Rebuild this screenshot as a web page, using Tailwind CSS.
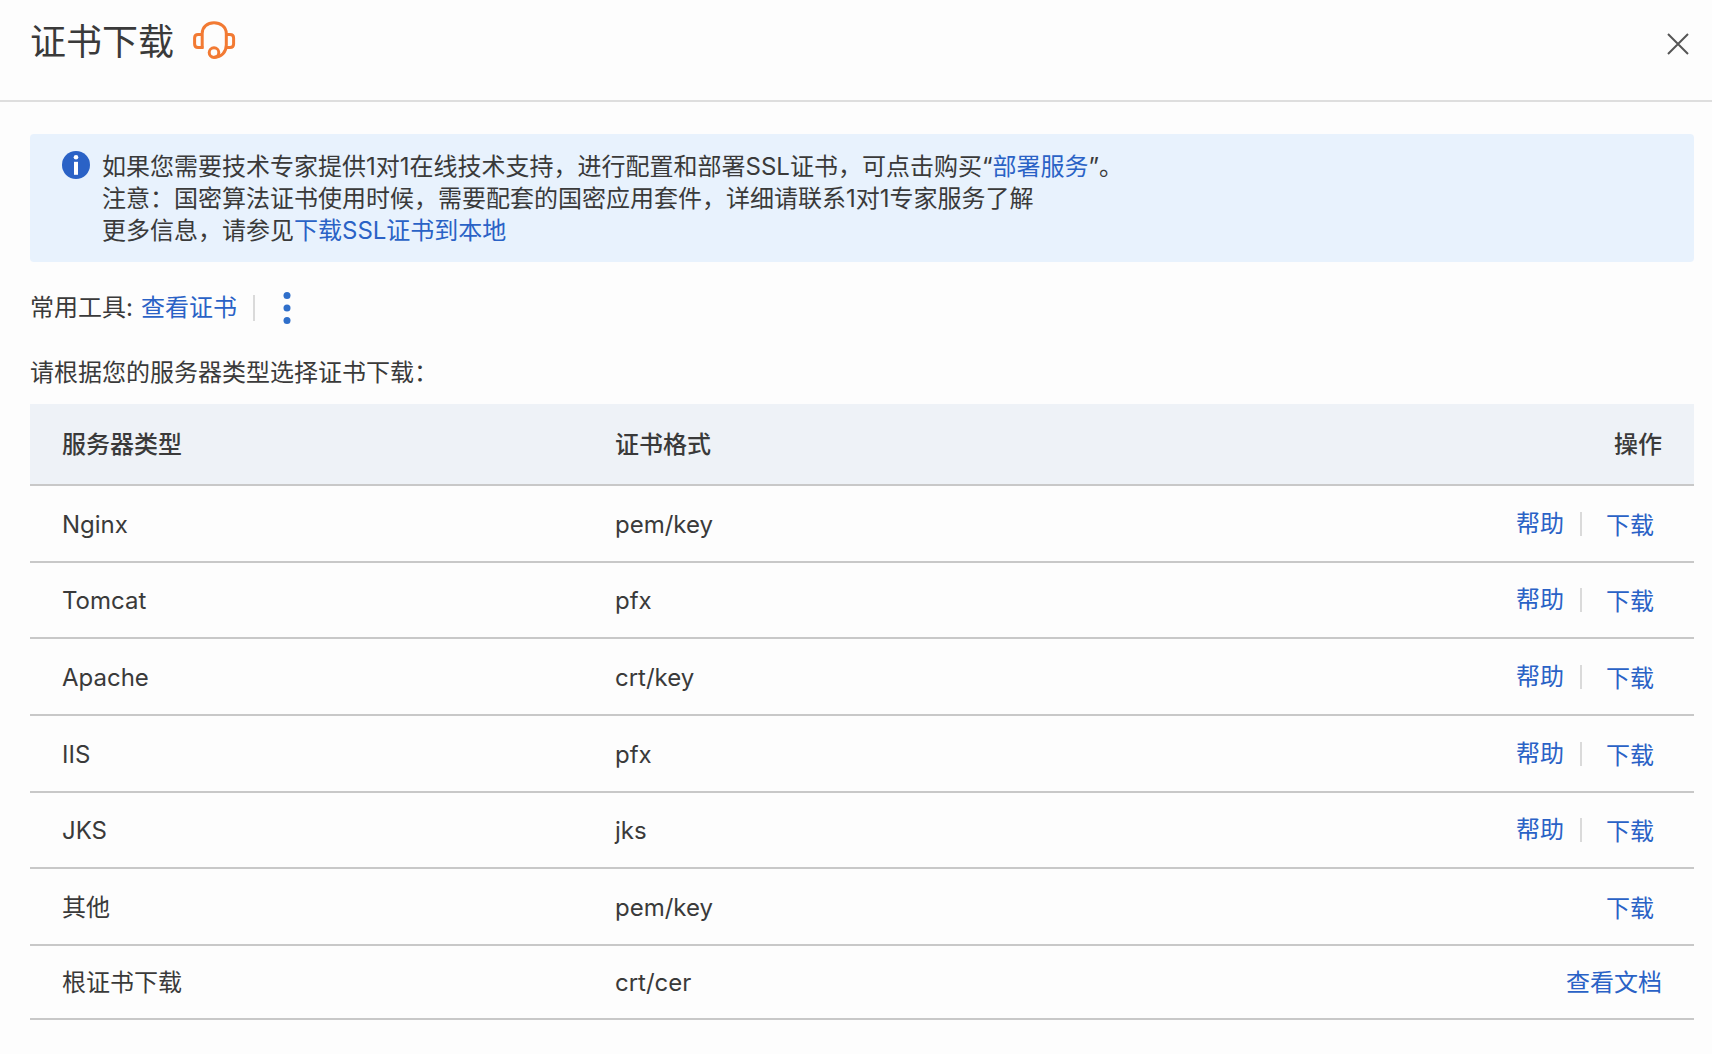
<!DOCTYPE html>
<html lang="zh-CN">
<head>
<meta charset="utf-8">
<meta name="viewport" content="width=device-width, initial-scale=1">
<title>证书下载</title>
<script src="https://cdn.jsdelivr.net/npm/@tailwindcss/browser@4"></script>
</head>
<body class="min-h-screen bg-[#fdfdfd] font-['Inter','Noto_Sans_CJK_SC',sans-serif] text-[24px] leading-8 text-[#3a3a3a]">
<header class="flex h-[102px] items-start justify-between border-b-2 border-[#dedede] pl-[30px] pr-[22px]">
  <div class="flex items-start gap-[18px] pt-[18px]">
    <h1 class="text-[36px] leading-[48px]">证书下载</h1>
    <svg class="mt-[3px] h-[39px] w-[44px]" viewBox="0 0 44 39" fill="none" stroke="#f27a33" stroke-width="3" role="img" aria-label="客服">
      <path d="M10.2 27.5V12.5C10.2 6 15.5 1.8 22 1.8S34.3 6 34.3 12.5V24C34.3 31 29.5 36.2 22.2 36.2"/>
      <path d="M10.2 13.5H6Q2.6 13.5 2.6 17V23Q2.6 26.5 6 26.5H11.4"/>
      <path d="M34.3 13.5H38Q41.6 13.5 41.6 17V23Q41.6 26.5 38 26.5H34.3"/>
      <circle cx="22" cy="31.6" r="4.8"/>
    </svg>
  </div>
  <button type="button" aria-label="关闭" class="mt-[32px]">
    <svg class="h-6 w-6" viewBox="0 0 24 24" stroke="#555" stroke-width="2"><path d="M2 2 22 22M22 2 2 22"/></svg>
  </button>
</header>
<main class="px-[30px] pt-8 pr-[18px]">
  <section class="flex gap-3 rounded bg-[#e8f2fd] pt-[17px] pb-[15px] pl-8 pr-8">
    <svg class="h-7 w-7 shrink-0" viewBox="0 0 28 28"><circle cx="14" cy="14" r="14" fill="#2a62c6"/><circle cx="14" cy="6.3" r="2.3" fill="#fff"/><path d="M12 10.8h4v13h-4z" fill="#fff"/></svg>
    <div>
      <p>如果您需要技术专家提供1对1在线技术支持，进行配置和部署SSL证书，可点击购买“<a href="#" class="text-[#2a62c6]">部署服务</a>”。</p>
      <p>注意：国密算法证书使用时候，需要配套的国密应用套件，详细请联系1对1专家服务了解</p>
      <p>更多信息，请参见<a href="#" class="text-[#2a62c6]">下载SSL证书到本地</a></p>
    </div>
  </section>
  <div class="mt-7 flex h-9 items-center">
    <span>常用工具:</span>
    <a href="#" class="ml-2 text-[#2a62c6]">查看证书</a>
    <span class="ml-4 h-[26px] w-[2px] bg-[#dadada]"></span>
    <button type="button" aria-label="更多工具" class="ml-7">
      <svg class="h-8 w-2" viewBox="0 0 8 32" fill="#2f6fca"><circle cx="4" cy="3.5" r="3.5"/><circle cx="4" cy="16" r="3.5"/><circle cx="4" cy="28.5" r="3.5"/></svg>
    </button>
  </div>
  <p class="mt-[31px]">请根据您的服务器类型选择证书下载：</p>
  <table class="mt-[15px] w-full table-fixed border-separate border-spacing-0 [&_td]:border-b-2 [&_td]:border-[#c8c8c8] [&_td]:px-8 [&_th]:border-b-2 [&_th]:border-[#c8c8c8] [&_th]:px-8 [&_th]:pt-[2px] [&_th]:font-medium [&_td]:pt-[2px] [&_a]:text-[#2a62c6] [&_button]:text-[#2a62c6]">
    <colgroup><col class="w-[553px]"><col><col></colgroup>
    <thead><tr class="h-[82px] bg-[#eef2f7] text-left"><th scope="col">服务器类型</th><th scope="col">证书格式</th><th scope="col" class="text-right">操作</th></tr></thead>
    <tbody>
      <tr class="h-[77px]"><td>Nginx</td><td>pem/key</td><td><div class="flex items-center justify-end pr-2 pb-[2px]"><a href="#">帮助</a><span class="ml-4 mr-6 h-6 w-[2px] bg-[#dadada]"></span><button type="button" class="pt-1">下载</button></div></td></tr>
      <tr class="h-[76px]"><td>Tomcat</td><td>pfx</td><td><div class="flex items-center justify-end pr-2 pb-[2px]"><a href="#">帮助</a><span class="ml-4 mr-6 h-6 w-[2px] bg-[#dadada]"></span><button type="button" class="pt-1">下载</button></div></td></tr>
      <tr class="h-[77px]"><td>Apache</td><td>crt/key</td><td><div class="flex items-center justify-end pr-2 pb-[2px]"><a href="#">帮助</a><span class="ml-4 mr-6 h-6 w-[2px] bg-[#dadada]"></span><button type="button" class="pt-1">下载</button></div></td></tr>
      <tr class="h-[77px]"><td>IIS</td><td>pfx</td><td><div class="flex items-center justify-end pr-2 pb-[2px]"><a href="#">帮助</a><span class="ml-4 mr-6 h-6 w-[2px] bg-[#dadada]"></span><button type="button" class="pt-1">下载</button></div></td></tr>
      <tr class="h-[76px]"><td>JKS</td><td>jks</td><td><div class="flex items-center justify-end pr-2 pb-[2px]"><a href="#">帮助</a><span class="ml-4 mr-6 h-6 w-[2px] bg-[#dadada]"></span><button type="button" class="pt-1">下载</button></div></td></tr>
      <tr class="h-[77px]"><td>其他</td><td>pem/key</td><td><div class="flex items-center justify-end pr-2 pb-[2px]"><button type="button" class="pt-1">下载</button></div></td></tr>
      <tr class="h-[74px]"><td>根证书下载</td><td>crt/cer</td><td class="text-right"><a href="#">查看文档</a></td></tr>
    </tbody>
  </table>
</main>
</body>
</html>
